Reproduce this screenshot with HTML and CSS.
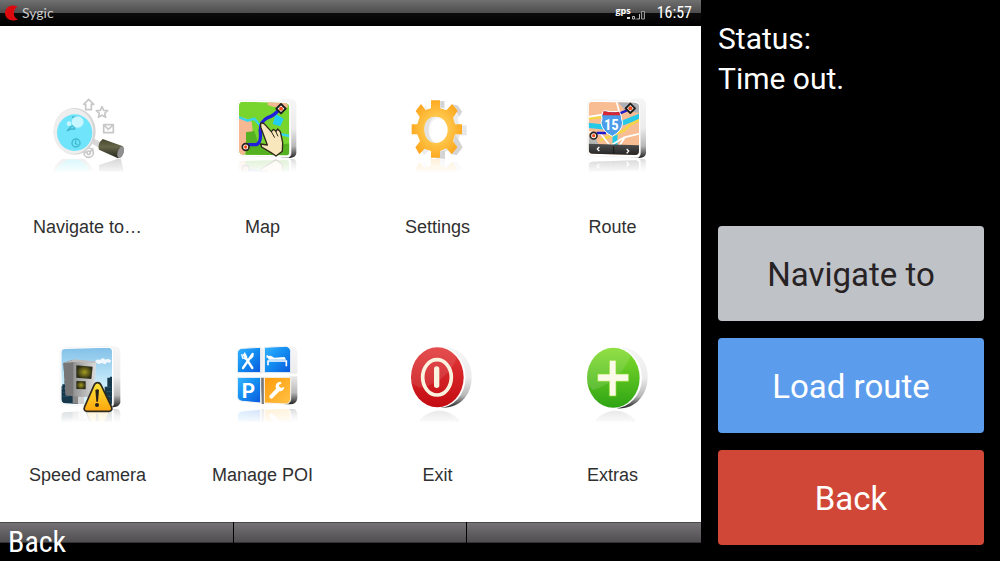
FILE: index.html
```html
<!DOCTYPE html>
<html lang="en">
<head>
<meta charset="utf-8">
<meta name="viewport" content="width=device-width, initial-scale=1">
<title>Sygic</title>
<link rel="stylesheet" href="styles.css">
</head>
<body>
<svg class="defs" width="0" height="0" aria-hidden="true">
  <defs>
    <linearGradient id="side" x1="0" y1="0" x2="0" y2="1"><stop offset="0" stop-color="#f6f6f6"/><stop offset=".5" stop-color="#ececec"/><stop offset=".8" stop-color="#b8b8b8"/><stop offset="1" stop-color="#222"/></linearGradient>
    <linearGradient id="side-light" x1="0" y1="0" x2="1" y2="1"><stop offset="0" stop-color="#f8f8f8"/><stop offset="1" stop-color="#e0e0e0"/></linearGradient>
    <linearGradient id="blue" x1="0" y1="0" x2="1" y2="1"><stop offset="0" stop-color="#35b4ff"/><stop offset=".5" stop-color="#128bf0"/><stop offset="1" stop-color="#0b58dc"/></linearGradient>
    <linearGradient id="orange" x1="0" y1="0" x2="1" y2="1"><stop offset="0" stop-color="#ff9b0a"/><stop offset="1" stop-color="#ffc247"/></linearGradient>
    <radialGradient id="gear"><stop offset="0" stop-color="#ffdf70"/><stop offset="1" stop-color="#fdaa22"/></radialGradient>
    <linearGradient id="red" x1="0" y1="0" x2="0" y2="1"><stop offset="0" stop-color="#e23a3a"/><stop offset="1" stop-color="#c30b12"/></linearGradient>
    <linearGradient id="green" x1="0" y1="0" x2="0" y2="1"><stop offset="0" stop-color="#83dc2c"/><stop offset="1" stop-color="#2ea414"/></linearGradient>
    <linearGradient id="handle" x1="0" y1="0" x2="0" y2="1"><stop offset="0" stop-color="#45452e"/><stop offset=".4" stop-color="#66664a"/><stop offset="1" stop-color="#25251c"/></linearGradient>
    <linearGradient id="sky" x1="0" y1="0" x2="0" y2="1"><stop offset="0" stop-color="#80bfe8"/><stop offset=".6" stop-color="#c8ecfa"/><stop offset="1" stop-color="#e4f8ff"/></linearGradient>
    <linearGradient id="metal"><stop offset="0" stop-color="#707070"/><stop offset=".3" stop-color="#929292"/><stop offset="1" stop-color="#dcdcdc"/></linearGradient>
    <linearGradient id="warn" x1="0" y1="0" x2="0" y2="1"><stop offset="0" stop-color="#ffe63a"/><stop offset="1" stop-color="#fba50c"/></linearGradient>
    <radialGradient id="lens"><stop offset="0" stop-color="#a49c20"/><stop offset="1" stop-color="#2a2a16"/></radialGradient>
    <linearGradient id="dark" x1="0" y1="0" x2="0" y2="1"><stop offset="0" stop-color="#505050"/><stop offset="1" stop-color="#202020"/></linearGradient>
    <linearGradient id="fade" x1="0" y1="0" x2="0" y2="1"><stop offset="0" stop-color="#fff" stop-opacity=".18"/><stop offset="1" stop-color="#fff" stop-opacity=".04"/></linearGradient>
    <mask id="reflect" maskUnits="userSpaceOnUse" x="0" y="222" width="300" height="38"><rect y="222" width="300" height="38" fill="url(#fade)"/></mask>
    <clipPath id="map-tile"><path d="M66 50 192 54Q205 56 205 68V200Q205 212 192 211L66 209Q54 208 54 196V62Q54 50 66 50Z"/></clipPath>
    <clipPath id="route-tile"><path d="M64 50 190 53Q204 54 204 66V198Q204 211 191 210L64 206Q53 205 53 194V61Q53 50 64 50Z"/></clipPath>
    <clipPath id="camera-tile"><path d="M76 42 204 38Q216 38 216 50V202Q216 216 203 214L76 205Q64 204 64 192V54Q64 42 76 42Z"/></clipPath>
    <g id="marker"><path d="M0-14 14 0 0 14-14 0Z" fill="#fff" stroke="#202020" stroke-width="6" stroke-linejoin="round"/><circle r="6" fill="#f34d1f"/></g>
  </defs>
</svg>

<div class="screen">
  <main class="device">
    <header class="topbar">
      <div class="brand">
        <svg class="brand-mark" viewBox="0 0 14 16" aria-hidden="true"><path d="M12.500 1.600C5.500-1.500 0 3 0 8s5.500 9.700 13 6.400C9.500 12.500 8.700 10.300 8.900 8c.1-2.500 1-4.500 3.600-6.400Z" fill="#dc0a0e"/></svg>
        <span>Sygic</span>
      </div>
      <div class="indicators">
        <div class="gps"><span>gps</span>
          <svg viewBox="0 0 20 11" aria-hidden="true"><path d="M1 8h3v2H1z" fill="#ddd"/><path d="M6.500 7.500V10h2V7.500zM10.500 10h-1m4-5v5h-2.500" fill="none" stroke="#bbb"/><path d="M15.500 2.500h3v7.500h-3z" fill="#222" stroke="#999"/></svg>
        </div>
        <time>16:57</time>
      </div>
    </header>

    <nav class="menu" aria-label="Main menu">
      <button class="item" type="button">
        <svg class="icon" viewBox="-9 0 300 300" aria-hidden="true">
          <g mask="url(#reflect)"><ellipse cx="96" cy="282" rx="60" ry="64" fill="#2fd8f0" stroke="#aaa" stroke-width="10"/><path d="M174 240 239 219 248 260H174Z" fill="#222"/></g>
          <g fill="#fff" stroke="#c8c8c8" stroke-width="5" stroke-linejoin="round">
            <path d="M143 43 158 58H151V74H134V58H128Z"/>
            <path d="m183 65 5 11 12 1-9 8 3 12-11-6-11 6 3-12-9-8 12-1Z"/>
            <path d="M188 119H217V143H188ZM189 120 202 133 216 120" fill="none"/>
            <circle cx="143" cy="203" r="14"/><circle cx="143" cy="203" r="5"/><path d="M131 188 134 204M157 190 146 202" fill="none"/>
          </g>
          <path d="M155 158 183 174 173 188 147 172Z" fill="#d8d8d8"/>
          <ellipse cx="101" cy="139" rx="63" ry="70" fill="#d5d5d5"/>
          <ellipse cx="97" cy="139" rx="60" ry="68" fill="#eee"/>
          <ellipse cx="101" cy="143" rx="53" ry="55" fill="#6fe4fa"/>
          <g fill="none" stroke="#41b7cd" stroke-width="4"><path d="M78 138 89 126 98 121 101 132 91 132 78 138M93 96 113 97"/><circle cx="105" cy="174" r="12"/><path d="M105 166 103 175 111 180"/></g>
          <ellipse cx="110" cy="111" rx="18" ry="17" fill="#c7f6ff"/><circle cx="84" cy="116" r="7" fill="#c7f6ff"/>
          <path d="M185 162 244 183Q251 188 247 204 242 218 231 220L174 194Q168 177 185 162Z" fill="url(#handle)"/>
          <ellipse cx="239" cy="202" rx="9" ry="18" transform="rotate(18 239 202)" fill="#909093"/>
        </svg>
        <span class="label">Navigate to…</span>
      </button>

      <button class="item" type="button">
        <svg class="icon" viewBox="-24 0 300 300" aria-hidden="true">
          <g mask="url(#reflect)"><use href="#map-art" transform="translate(0 437) scale(1 -1)"/></g>
          <g id="map-art">
            <path d="M180 42 208 41Q225 42 226 56V204Q225 218 206 219L180 217Z" fill="url(#side)"/>
            <path d="M62 45 195 49Q210 50 210 64V204Q210 219 195 217L62 213Q49 212 49 199V58Q49 45 62 45Z" fill="#fff" stroke="#eee" stroke-width="2"/>
            <g clip-path="url(#map-tile)">
              <path d="M50 45H210V215H50Z" fill="#77d52e"/>
              <path d="M50 94Q70 96 92 110L96 146 70 210H50ZM140 48 200 55V68L160 66 140 60Z" fill="#f5b892"/>
              <path d="M75 142 100 138 112 175 130 187 207 175V212H75Z" fill="#55b022"/>
              <path d="M54 97 80 107 100 101 124 130 155 142 205 153" fill="none" stroke="#37d4ed" stroke-width="7"/>
              <path d="M164 87 188 101 178 124 155 117Z" fill="#22cdf2"/>
            </g>
            <path d="M80 179H106Q121 174 118 142T142 97Q158 93 174 74" fill="none" stroke="#211fdd" stroke-width="10"/>
            <use href="#marker" x="180" y="71"/>
            <circle cx="74" cy="186" r="10" fill="#fff" stroke="#2b211c" stroke-width="5"/><circle cx="74" cy="186" r="5" fill="#f34d1f"/>
            <path d="M119 115Q126 112 132 119L151 140 157 133 165 139 170 132 178 140 185 173 184 199 165 213 150 203 122 186 119 177 139 180 119 126Z" fill="#f8e7bc" stroke="#302819" stroke-width="4" stroke-linejoin="round"/>
            <path d="M151 140 161 158M164 139 171 154" stroke="#302819" stroke-width="3"/>
          </g>
        </svg>
        <span class="label">Map</span>
      </button>

      <button class="item" type="button">
        <svg class="icon" viewBox="-9 0 300 300" aria-hidden="true">
          <g mask="url(#reflect)"><use href="#gear-art" transform="translate(0 440) scale(1 -1)"/></g>
          <g id="gear-art">
            <path fill-rule="evenodd" d="M120 46H147V70L166 76 183 57 200 77 186 98 192 118H213V148H192L186 169 199 187 182 208 166 190 147 198V218H120V198L101 191 85 208 73 187 87 169 79 148H62V118H79L86 96 74 78 90 57 104 75 120 70ZM134 95C114 95 101 112 101 134S114 174 134 174 170 156 170 134 154 95 134 95Z" transform="translate(14 3)" fill="url(#side-light)"/>
            <path d="M148 48H160V68H148M184 58 201 62 213 80 205 94M193 150 205 169 215 187 197 210 182 208M148 199 162 197V222L147 219" fill="#d4d4d4"/>
            <path fill-rule="evenodd" d="M120 46H147V70L166 76 183 57 200 77 186 98 192 118H213V148H192L186 169 199 187 182 208 166 190 147 198V218H120V198L101 191 85 208 73 187 87 169 79 148H62V118H79L86 96 74 78 90 57 104 75 120 70ZM134 95C114 95 101 112 101 134S114 174 134 174 170 156 170 134 154 95 134 95Z" fill="url(#gear)"/>
            <path d="M128 95C93 99 89 158 125 172 108 149 108 116 128 95Z" fill="#e2e2e2"/>
          </g>
        </svg>
        <span class="label">Settings</span>
      </button>

      <button class="item" type="button">
        <svg class="icon" viewBox="-24 0 300 300" aria-hidden="true">
          <g mask="url(#reflect)"><use href="#route-art" transform="translate(0 436) scale(1 -1)"/></g>
          <g id="route-art">
            <path d="M180 41 206 40Q224 41 225 55V204Q224 218 206 219L180 217Z" fill="url(#side)"/>
            <path d="M62 45 193 48Q208 49 208 63V203Q208 219 194 218L62 213Q49 212 49 199V58Q49 45 62 45Z" fill="#fff" stroke="#eee" stroke-width="2"/>
            <g clip-path="url(#route-tile)">
              <path d="M50 45H210V215H50Z" fill="#f9bd93"/>
              <path d="M135 45H210V85L165 78Z" fill="#adb0b5"/>
              <path d="M50 150 75 160 83 181H50Z" fill="#b4b6b5"/>
              <path d="M50 121 100 126 160 112 210 92M132 140V184" fill="none" stroke="#26c9e8" stroke-width="15"/>
              <path d="M50 101 90 96 145 84M88 166 125 150 160 136 175 120 208 104" fill="none" stroke="#f4d645" stroke-width="8"/>
              <path d="M50 96 96 89 145 82 136 48M50 140 90 148 118 183M120 181 160 157 206 146M162 157 144 184" fill="none" stroke="#fff" stroke-width="5"/>
              <path d="M50 176 208 181V214L50 208Z" fill="url(#dark)"/>
            </g>
            <path d="M77 144H105M145 86 168 76" stroke="#201dca" stroke-width="7"/>
            <use href="#marker" x="178" y="70"/>
            <circle cx="68" cy="152" r="10" fill="#fff" stroke="#2b211c" stroke-width="5"/><circle cx="68" cy="152" r="5" fill="#f34d1f"/>
            <path d="M98 77Q120 82 145 79L151 94Q151 103 155 113 153 138 124 154 95 141 90 114 95 101 92 91Z" fill="#4b9cea" stroke="#fff" stroke-width="3"/>
            <path d="M98 78Q120 84 144 80L148 91H95Z" fill="#d92732"/>
            <path d="m85 186-6 6 6 6M167 192l6 6-6 7" fill="none" stroke="#fff" stroke-width="4"/>
            <path d="M128 184V206" stroke="#181818" stroke-width="3"/>
          </g>
          <text class="shield" x="121" y="134">15</text>
        </svg>
        <span class="label">Route</span>
      </button>

      <button class="item" type="button">
        <svg class="icon" viewBox="-6 -6 300 300" aria-hidden="true">
          <g mask="url(#reflect)"><use href="#camera-art" transform="translate(0 436) scale(1 -1)"/></g>
          <g id="camera-art">
            <path d="M190 35 224 34Q240 35 241 50V202Q239 216 220 217L190 216Z" fill="url(#side)"/>
            <path d="M74 38 205 34Q220 34 221 50V205Q220 219 204 217L74 209Q60 208 60 195V52Q60 39 74 38Z" fill="#fff" stroke="#eee" stroke-width="2"/>
            <g clip-path="url(#camera-tile)">
              <path d="M60 35H220V218H60Z" fill="url(#sky)"/>
              <path d="M60 154H67V148H74V138H83V155H90V175H98V184H115V206H60ZM194 217V155H202V128H210V125H220V217Z" fill="#17384a"/>
              <path d="M66 160h12m-8 12h14m-14 12h18m112-28h14m-14 14h14m-14 14h14m-14 14h14" stroke="#356d85" stroke-width="3" stroke-dasharray="3 3"/>
              <path d="M164 80Q170 71 180 75 188 65 196 74 207 68 214 78L209 83 200 82 197 88 184 84 177 88Z" fill="#fff" opacity=".85"/>
            </g>
            <path d="M98 183H132V207L98 205Z" fill="#888"/><path d="M114 184H132V207H114Z" fill="#d0d0d0"/>
            <path d="M70 84 100 74 168 80 164 160 144 187 77 181Z" fill="url(#metal)"/>
            <path d="M70 84 100 74V184L77 181Z" fill="#777"/><path d="M70 84 105 73 169 80 165 84 102 81Z" fill="#bbb"/>
            <path d="M109 91 158 95 154 132 109 128Z" fill="url(#lens)"/><path d="M109 138 137 139V163L109 162Z" fill="url(#lens)"/>
            <path d="M173 143Q180 143 184 152L214 215Q219 228 207 229H141Q129 228 134 215L162 151Q166 143 173 143Z" fill="url(#warn)" stroke="#302a1e" stroke-width="5"/>
            <path d="M166 165Q172 160 177 165L174 200H169Z" fill="#27221a"/><circle cx="171" cy="210" r="6" fill="#27221a"/>
          </g>
        </svg>
        <span class="label">Speed camera</span>
      </button>

      <button class="item" type="button">
        <svg class="icon" viewBox="-24 -6 300 300" aria-hidden="true">
          <g mask="url(#reflect)"><use href="#poi-art" transform="translate(0 427) scale(1 -1)"/></g>
          <g id="poi-art">
            <path d="M196 36 216 35Q228 38 229 52V116H207ZM207 124H229V190Q227 208 207 208H192Z" fill="url(#side)"/>
            <path d="M117 40H128V115H117Z" fill="#eee"/><path d="M119 128H129V207H122Z" fill="#777"/>
            <g stroke="#f5f5f5" stroke-width="3">
              <path d="M64 40 119 37V113H49V55Q50 41 64 40Z" fill="url(#blue)"/>
              <path d="M130 37 194 34Q207 35 209 49V113H130Z" fill="url(#blue)"/>
              <path d="M49 127H119V204L64 199Q50 197 49 184Z" fill="url(#blue)"/>
              <path d="M130 127H209V192Q207 207 193 207L130 204Z" fill="url(#orange)"/>
            </g>
            <path d="M69 60 94 99M95 57 66 99" stroke="#fff" stroke-width="7" stroke-linecap="round"/><path d="M62 57 65 69 74 72 77 66 70 53" fill="none" stroke="#fff" stroke-width="4"/><path d="M86 66 95 55 98 64 90 73Z" fill="#fff"/>
            <path d="M139 61V68M139 78H196V94M141 79V91" fill="none" stroke="#fff" stroke-width="5"/><path d="M139 63 149 62 160 68 191 66 195 74H143Z" fill="#fff"/>
            <path d="M151 185 173 162" stroke="#fff" stroke-width="12" stroke-linecap="round"/><path d="M179 140Q163 141 164 156 165 169 177 169 188 168 190 155L181 159 174 154V149L182 146Z" fill="#fff"/>
          </g>
          <text class="parking" x="82" y="188">P</text>
        </svg>
        <span class="label">Manage POI</span>
      </button>

      <button class="item" type="button">
        <svg class="icon" viewBox="-9 -6 300 300" aria-hidden="true">
          <g mask="url(#reflect)"><ellipse cx="145" cy="315" rx="80" ry="88" fill="#777"/></g>
          <path d="M147 36C205 32 242 73 242 126S207 221 151 218Z" fill="url(#side)"/>
          <ellipse cx="142" cy="127" rx="82" ry="92" fill="#fff"/>
          <ellipse cx="139" cy="127" rx="79" ry="90" fill="url(#red)"/>
          <path d="M62 145C53 77 87 38 138 37 163 37 184 47 197 64 191 99 150 147 87 158Z" fill="#fff" opacity=".1"/>
          <ellipse cx="138" cy="127" rx="43" ry="53" fill="none" stroke="#faf3df" stroke-width="11"/>
          <path d="M137 102V151" stroke="#faf3df" stroke-width="16" stroke-linecap="round"/>
        </svg>
        <span class="label">Exit</span>
      </button>

      <button class="item" type="button">
        <svg class="icon" viewBox="-24 -6 300 300" aria-hidden="true">
          <g mask="url(#reflect)"><ellipse cx="133" cy="315" rx="80" ry="88" fill="#777"/></g>
          <path d="M137 37C192 32 230 73 230 126S194 223 139 220Z" fill="url(#side)"/>
          <ellipse cx="130" cy="128" rx="83" ry="92" fill="#fff"/>
          <ellipse cx="127" cy="128" rx="79" ry="90" fill="url(#green)"/>
          <path d="M48 145C44 77 75 39 126 38 148 38 167 47 179 61 165 100 127 149 65 165Z" fill="#fff" opacity=".12"/>
          <path d="M115 76H135V117H173V139H135V183H115V139H80V117H115Z" fill="#fbfae8" stroke="#8cdd2b" stroke-width="2" stroke-linejoin="round"/>
        </svg>
        <span class="label">Extras</span>
      </button>
    </nav>

    <footer class="softkeys">
      <div class="softkey"><button class="softkey-button" type="button">Back</button></div>
      <div class="softkey"></div>
      <div class="softkey"></div>
    </footer>
  </main>

  <aside class="panel">
    <p class="status" role="status">Status:<br>Time out.</p>
    <div class="actions">
      <button class="action action-muted" type="button">Navigate to</button>
      <button class="action action-primary" type="button">Load route</button>
      <button class="action action-danger" type="button">Back</button>
    </div>
  </aside>
</div>
</body>
</html>
```

FILE: styles.css
```css
* {
  box-sizing: border-box;
}

body {
  margin: 0;
  background: #000;
  color: #fff;
  font-family: "Liberation Sans", Arial, sans-serif;
}

button {
  border: 0;
  padding: 0;
  background: none;
  color: inherit;
  font: inherit;
  cursor: pointer;
}

.defs {
  position: absolute;
}

.screen {
  display: grid;
  grid-template-columns: 701fr 299fr;
  min-height: 100vh;
}

.device {
  display: flex;
  flex-direction: column;
  min-width: 0;
}

.topbar {
  display: flex;
  justify-content: space-between;
  align-items: center;
  height: 26px;
  padding: 0 9px 0 5px;
  background: linear-gradient(#707070, #4c4c4c 13px, #0c0c0c 13px, #000);
}

.brand {
  display: flex;
  align-items: center;
  gap: 3px;
  color: #ccc;
  font: 400 14px/24px Lato, sans-serif;
}

.brand-mark {
  width: 14px;
  height: 16px;
}

.indicators {
  display: flex;
  align-items: center;
  gap: 11px;
  font: 16px/26px "Roboto Condensed", Roboto, sans-serif;
}

.gps {
  display: flex;
  align-items: center;
  font: 700 9px/16px "Open Sans", sans-serif;
}

.gps span {
  padding-bottom: 4px;
}

.gps svg {
  width: 20px;
  height: 11px;
  margin: 3px 0 0 -5px;
}

.menu {
  flex: 1;
  display: grid;
  grid-template-columns: repeat(4, 1fr);
  grid-template-rows: repeat(2, 1fr);
  padding-right: 1px;
  background: #fff;
}

.item {
  display: flex;
  flex-direction: column;
  align-items: center;
  justify-content: center;
  gap: 30px;
  padding-top: 24px;
  color: #303030;
}

.icon {
  width: 100px;
  height: 100px;
}

.label {
  font-size: 18px;
  line-height: 24px;
}

.shield,
.parking {
  fill: #fff;
  font-family: Roboto, sans-serif;
  font-weight: 700;
  text-anchor: middle;
}

.shield {
  font-size: 44px;
  font-family: "Roboto Condensed", Roboto, sans-serif;
}

.parking {
  font-size: 62px;
}

.softkeys {
  display: grid;
  grid-template-columns: repeat(3, 1fr);
  height: 39px;
  background: linear-gradient(#4a4a4a 1px, #747274 1px, #504e50 20px, #333 20px, #333 21px, #000 21px);
}

.softkey {
  display: flex;
  align-items: center;
  padding-left: 8px;
  border-right: 1px solid #000;
}

.softkey:last-child {
  border-right: 0;
}

.softkey-button {
  font: 30px/40px "Roboto Condensed", Roboto, sans-serif;
}

.panel {
  display: flex;
  flex-direction: column;
  justify-content: space-between;
  padding: 19px 16px 16px 17px;
  font-family: Roboto, sans-serif;
}

.status {
  margin: 0;
  font-size: 30px;
  line-height: 40px;
}

.actions {
  display: grid;
  gap: 17px;
}

.action {
  height: 95px;
  padding-top: 3px;
  border-radius: 4px;
  font-size: 33px;
  line-height: 40px;
}

.action-muted {
  background: #bfc2c7;
  color: #272324;
}

.action-primary {
  background: #5c9ced;
}

.action-danger {
  background: #d04737;
}
```
